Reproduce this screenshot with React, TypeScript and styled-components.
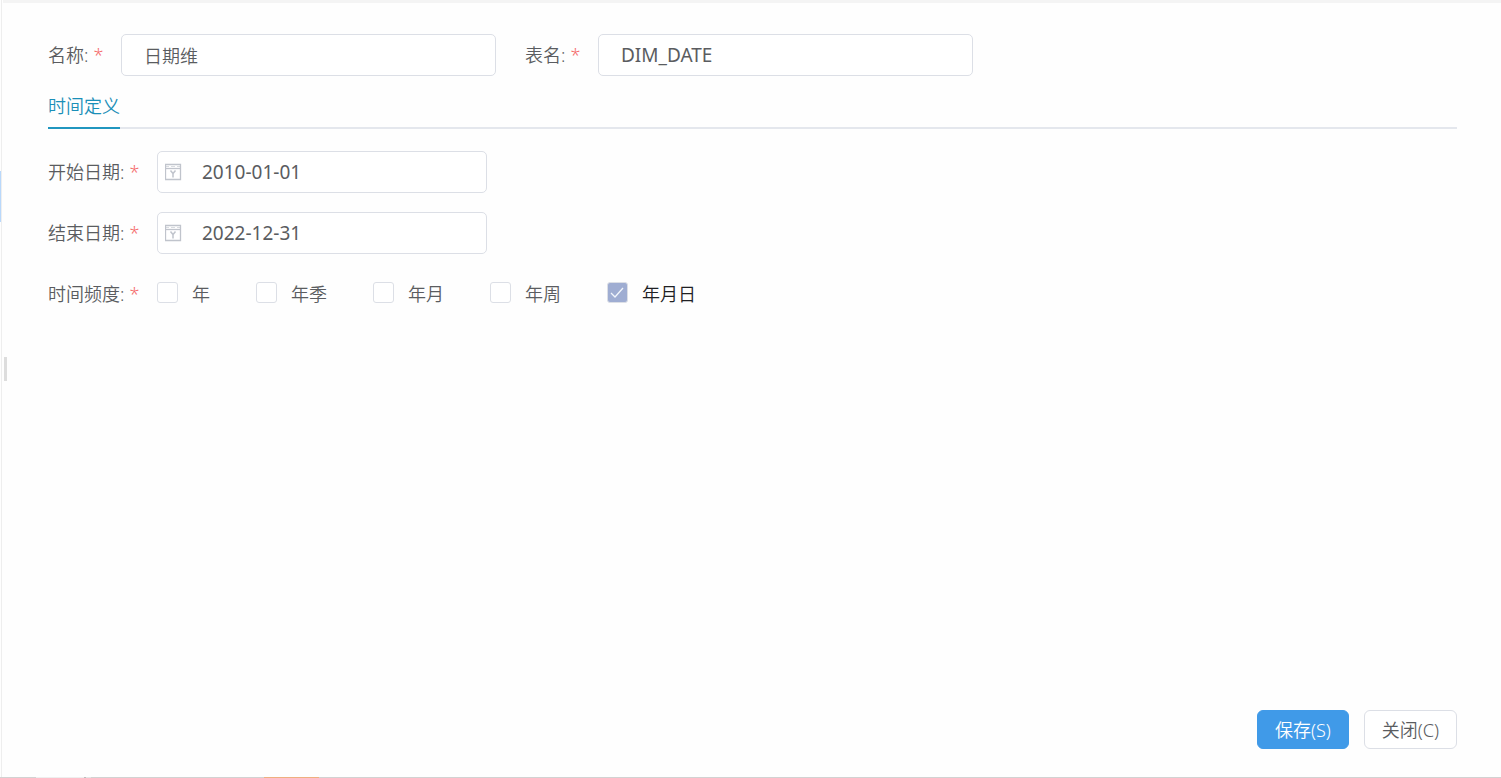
import React from 'react';
import styled, { createGlobalStyle } from 'styled-components';

const GlobalStyle = createGlobalStyle`
  *, *::before, *::after { box-sizing: border-box; }
  body {
    margin: 0;
    background: #fefefe;
    color: #5a5c60;
    font-family: "Noto Sans", "Noto Sans CJK SC", sans-serif;
    font-size: 18px;
    font-weight: 350;
    line-height: 24px;
  }
  input, button { font: inherit; color: inherit; }
`;

const Page = styled.div`
  min-height: 100vh;
  display: flex;
  flex-direction: column;
`;

const Body = styled.div`
  flex: 1;
  display: flex;
`;

const Rail = styled.div`
  position: relative;
  width: 2px;
  border-right: 1px solid #eeeeee;
`;

const RailMark = styled.div`
  margin-top: 171px;
  height: 51px;
  background: #b9d8fb;
`;

const Handle = styled.div`
  position: absolute;
  left: 4px;
  top: 46%;
  width: 3px;
  height: 24px;
  background: #dddddd;
`;

const Form = styled.form`
  flex: 1;
  min-width: 0;
  margin-left: 1px;
  display: flex;
  flex-direction: column;
  border-top: 3px solid #f4f4f4;
  padding: 31px 44px 28px 45px;
`;

const NameRow = styled.div`
  display: flex;
  flex-wrap: wrap;
  gap: 16px 29px;
`;

const Field = styled.div`
  display: flex;
  align-items: center;
`;

const Label = styled.label<{ $width: number }>`
  flex: none;
  width: ${(p) => p.$width}px;
`;

const Star = styled.span`
  margin-left: 5px;
  color: #f56c6c;
`;

const TextInput = styled.input<{ $latin?: boolean }>`
  width: 375px;
  height: 42px;
  padding: 0 22px;
  border: 1px solid #dcdfe6;
  border-radius: 5px;
  background: #ffffff;
  outline: none;
  font-size: ${(p) => (p.$latin ? 19 : 18)}px;
  font-weight: ${(p) => (p.$latin ? 400 : 350)};
`;

const Tabs = styled.div`
  display: flex;
  margin-top: 16px;
  box-shadow: inset 0 -2px #e4e7ed;
`;

const Tab = styled.button`
  height: 37px;
  padding: 0 0 8px;
  border: 0;
  border-bottom: 2px solid #2096bf;
  background: none;
  color: #1a8fb8;
`;

const Rows = styled.div`
  display: flex;
  flex-direction: column;
  gap: 19px;
  margin-top: 22px;
`;

const DateBox = styled.div`
  display: flex;
  align-items: center;
  width: 330px;
  height: 42px;
  padding-left: 7px;
  border: 1px solid #dcdfe6;
  border-radius: 5px;
  background: #ffffff;
`;

const DateInput = styled.input`
  flex: 1;
  min-width: 0;
  margin-left: 20px;
  padding: 0;
  border: 0;
  background: none;
  outline: none;
  font-size: 19px;
  font-weight: 400;
`;

const CheckGroup = styled.div`
  display: flex;
  flex-wrap: wrap;
  align-items: center;
  gap: 12px 46px;
  min-height: 42px;
`;

const CheckLabel = styled.label<{ $on: boolean }>`
  display: flex;
  align-items: flex-start;
  gap: 14px;
  color: ${(p) => (p.$on ? '#202124' : '#5a5c60')};
`;

const CheckBox = styled.span`
  display: grid;
  width: 21px;
  height: 21px;

  > * { grid-area: 1 / 1; }
  svg { display: none; pointer-events: none; }
  input:checked + svg { display: block; }
`;

const CheckInput = styled.input`
  appearance: none;
  width: 21px;
  height: 21px;
  margin: 0;
  border: 1px solid #dcdfe6;
  border-radius: 3px;
  background: #ffffff;

  &:checked { background: #9fadd2; }
`;

const Footer = styled.footer`
  display: flex;
  justify-content: flex-end;
  gap: 15px;
  margin-top: auto;
`;

const Button = styled.button<{ $primary?: boolean }>`
  height: 39px;
  padding: 0 17px;
  border: 1px solid ${(p) => (p.$primary ? '#409ae8' : '#dcdfe6')};
  border-radius: 6px;
  background: ${(p) => (p.$primary ? '#409ae8' : '#ffffff')};
  color: ${(p) => (p.$primary ? '#ffffff' : '#5a5c60')};
`;

const Strip = styled.div`
  display: flex;
  height: 1px;
  background: #d2d2d2;
`;

const StripPart = styled.div<{ $width: number; $color: string }>`
  width: ${(p) => p.$width}px;
  background: ${(p) => p.$color};
`;

const CalendarIcon = () => (
  <svg width="17" height="18" viewBox="0 0 17 18" fill="none" stroke="#c0c4cc" aria-hidden="true">
    <path d="M.5 1.500h15v15H.5z" strokeWidth="1.300" />
    <path d="M0 5.500h16" strokeWidth="1.300" />
    <path d="M1 3.500h3M6 3.500h4M12 3.500h3" strokeOpacity=".6" />
    <path d="M5.500 7.500L8 10.500l2.500-3M8 10.500v4" strokeWidth="1.500" />
  </svg>
);

const CheckIcon = () => (
  <svg width="21" height="21" viewBox="0 0 21 21" fill="none" stroke="#f2f6fc" strokeWidth="1.300" aria-hidden="true">
    <path d="M4 11l4 4 8-9" />
  </svg>
);

const dates = [
  { id: 'start', label: '开始日期:', value: '2010-01-01' },
  { id: 'end', label: '结束日期:', value: '2022-12-31' },
];

const frequencies = ['年', '年季', '年月', '年周', '年月日'];

export default function App() {
  const [selected, setSelected] = React.useState<string[]>(['年月日']);
  const toggle = (name: string) =>
    setSelected((s) => (s.includes(name) ? s.filter((n) => n !== name) : [...s, name]));

  return (
    <Page>
      <GlobalStyle />
      <Body>
        <Rail>
          <RailMark />
          <Handle />
        </Rail>
        <Form onSubmit={(e) => e.preventDefault()}>
          <NameRow>
            <Field>
              <Label $width={73} htmlFor="name">名称:<Star>*</Star></Label>
              <TextInput id="name" defaultValue="日期维" />
            </Field>
            <Field>
              <Label $width={73} htmlFor="table">表名:<Star>*</Star></Label>
              <TextInput id="table" $latin defaultValue="DIM_DATE" />
            </Field>
          </NameRow>
          <Tabs role="tablist">
            <Tab type="button" role="tab" aria-selected="true">时间定义</Tab>
          </Tabs>
          <Rows>
            {dates.map((d) => (
              <Field key={d.id}>
                <Label $width={109} htmlFor={d.id}>{d.label}<Star>*</Star></Label>
                <DateBox>
                  <CalendarIcon />
                  <DateInput id={d.id} defaultValue={d.value} />
                </DateBox>
              </Field>
            ))}
            <Field role="group" aria-labelledby="frequency">
              <Label as="span" $width={109} id="frequency">时间频度:<Star>*</Star></Label>
              <CheckGroup>
                {frequencies.map((f) => (
                  <CheckLabel key={f} $on={selected.includes(f)}>
                    <CheckBox>
                      <CheckInput type="checkbox" checked={selected.includes(f)} onChange={() => toggle(f)} />
                      <CheckIcon />
                    </CheckBox>
                    {f}
                  </CheckLabel>
                ))}
              </CheckGroup>
            </Field>
          </Rows>
          <Footer>
            <Button type="submit" $primary>保存(S)</Button>
            <Button type="button">关闭(C)</Button>
          </Footer>
        </Form>
      </Body>
      <Strip>
        <StripPart $width={36} $color="#d2d2d2" />
        <StripPart $width={48} $color="#eeeeee" />
        <StripPart $width={2} $color="#bdbdbd" />
        <StripPart $width={5} $color="#e4e4e4" />
        <StripPart $width={173} $color="#d2d2d2" />
        <StripPart $width={55} $color="#eeb080" />
      </Strip>
    </Page>
  );
}
